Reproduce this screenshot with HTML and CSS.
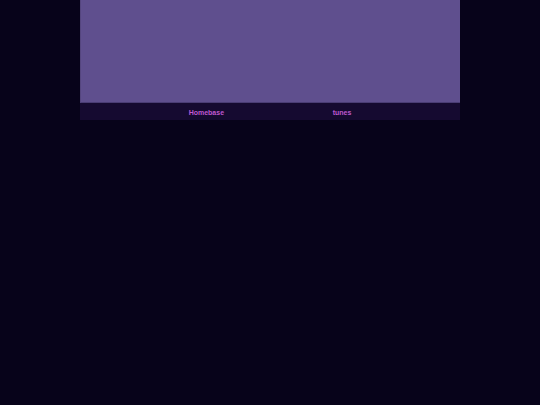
FILE: index.html
```html
<!DOCTYPE html>
<html>
<head>
<meta charset="utf-8">
<link rel="stylesheet" href="styles.css">
</head>
<body>
<div class="page">
  <div class="banner"></div>
  <nav class="nav">
    <a class="link" href="#">Homebase</a>
    <a class="link" href="#">tunes</a>
  </nav>
</div>
</body>
</html>
```
FILE: styles.css
```css
html, body {
  margin: 0;
  padding: 0;
  background: #07031a;
  height: 100%;
}
.page {
  width: 380px;
  margin: 0 auto;
}
.banner {
  height: 102px;
  background: #5f4f8e;
  border-left: 1px solid #55467f;
  border-bottom: 1px solid #4a3d74;
}
.nav {
  height: 16px;
  padding-top: 1px;
  background: #150a30;
  display: flex;
  justify-content: space-evenly;
  align-items: center;
}
.link {
  font-family: "Liberation Sans", Arial, sans-serif;
  font-size: 7px;
  font-weight: bold;
  color: #bf58cf;
  text-decoration: none;
}
```
